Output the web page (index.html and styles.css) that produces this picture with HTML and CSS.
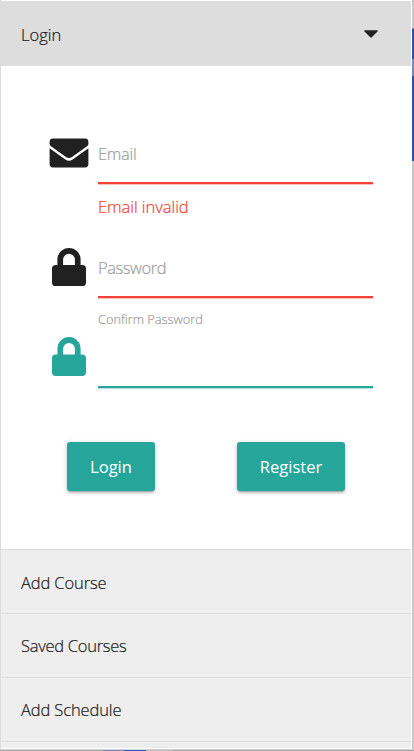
FILE: index.html
```html
<!DOCTYPE html>
<html lang="en">
<head>
<meta charset="utf-8">
<title>Login</title>
<link rel="stylesheet" href="styles.css">
</head>
<body>
<div class="window">
  <main class="panel">
    <header class="item open"><span class="t-login">Login</span>
      <svg class="caret" width="14" height="8" viewBox="0 0 14 8"><path d="M.8.2h12.4q1 .3.3 1.2L8 7Q7 8 6 7L.5 1.4Q-.2.5.8.2z"/></svg>
    </header>
    <form class="form">
      <div class="field email">
        <svg class="icon" width="40" height="30" viewBox="0 0 40 30"><path d="M4 .5h32q3.4 0 3.4 3.4v2.2q0 1.2-1 2L23 19q-3 2.2-6 0L1.6 8.1q-1-.8-1-2V3.9Q.6.5 4 .5zM.6 10.2 16.3 21.4q3.7 2.5 7.4 0L39.4 10.2v15.9q0 3.4-3.4 3.4H4Q.6 29.5.6 26.1z"/></svg>
        <div class="input"><label class="t-email">Email</label></div>
      </div>
      <p class="error"><span>Email invalid</span></p>
      <div class="field password">
        <svg class="icon" width="34" height="38" viewBox="0 0 34 38"><path fill-rule="evenodd" d="M5.4 17v-5.5a11.6 11.5 0 0 1 23.2 0V17h1.6Q34 17 34 20.6v13.8Q34 38 30.4 38H3.6Q0 38 0 34.4V20.6Q0 17 3.8 17zm5.7 0h11.8v-5a5.9 6.2 0 0 0-11.8 0z"/></svg>
        <div class="input"><label class="t-password">Password</label></div>
      </div>
      <p class="small"><span>Confirm Password</span></p>
      <div class="field confirm">
        <svg class="icon" width="34" height="39" viewBox="0 0 34 38" preserveAspectRatio="none"><path fill-rule="evenodd" d="M5.4 17v-5.5a11.6 11.5 0 0 1 23.2 0V17h1.6Q34 17 34 20.6v13.8Q34 38 30.4 38H3.6Q0 38 0 34.4V20.6Q0 17 3.8 17zm5.7 0h11.8v-5a5.9 6.2 0 0 0-11.8 0z"/></svg>
        <div class="input"></div>
      </div>
      <div class="actions">
        <button type="button" class="btn login">Login</button>
        <button type="button" class="btn register">Register</button>
      </div>
    </form>
    <nav>
      <div class="item"><span class="t-add">Add Course</span></div>
      <div class="item raised"><span class="t-saved">Saved Courses</span></div>
      <div class="item raised"><span class="t-schedule">Add Schedule</span></div>
      <div class="item last"></div>
    </nav>
  </main>
  <div class="edge"></div>
</div>
<div class="bottom-edge"></div>
</body>
</html>
```
FILE: styles.css
```css
* { box-sizing: border-box; }
body {
  margin: 0;
  height: 751px;
  overflow: hidden;
  background: #fff;
  color: #212121;
  font: 300 16.5px/24px "Open Sans", "Noto Sans", sans-serif;
  -webkit-text-stroke: .22px currentColor;
}
.window { display: flex; height: 749px; }
.panel { width: 412px; padding-top: 1px; border-right: 1px solid #fff; border-left: 1px solid #ddd; }
.edge {
  width: 2px;
  background: linear-gradient(#c8c8c8 28px, #888 28px 29px, #2d54a6 29px 59px, #7389b8 59px 76px, #2d54a6 76px 161px, #c8c8c8 161px);
}
.bottom-edge {
  height: 2px;
  border-top: 1px solid #d0d0d0;
  background: linear-gradient(90deg, #aaa 103px, #7389b8 103px 124px, #2d62b6 124px 146px, #bbb 146px 173px, #a5a5a5 173px);
}
.item {
  display: flex;
  align-items: center;
  justify-content: space-between;
  height: 64px;
  padding: 2px 33px 0 20px;
  background: #eee;
  border-top: 1px solid #ddd;
}
.open { height: 65px; background: #ddd; }
.raised { padding-top: 0; }
.last { height: 7px; padding: 0; }
.caret { fill: #212121; margin-bottom: 3px; }
.t-add, .t-schedule { letter-spacing: -.12px; }
.t-saved { letter-spacing: -.28px; }
.form { height: 483px; padding: 70px 38px 0 48px; background: #fff; }
.field { display: flex; }
.icon { flex: none; fill: #212121; }
.email .icon { margin: 2px 9px 0 0; }
.password .icon { margin: 2px 12px 0 3px; }
.confirm .icon { margin: 1px 12px 0 3px; fill: #26a69a; }
.input { flex: 1; height: 48px; padding-top: 6px; border-bottom: 2px solid #f44336; box-shadow: 0 1px 0 #fac0bc; color: #9e9e9e; }
.t-email { letter-spacing: -.3px; }
.t-password { letter-spacing: -.45px; }
.email { height: 48px; }
.error { height: 24px; margin: 11px 0 0 49px; color: #f44336; letter-spacing: -.05px; }
.password { margin-top: 27px; }
.password .input { height: 52px; padding-top: 10px; }
.small { height: 20px; margin: 11px 0 0 49px; font-size: 12.8px; line-height: 20px; color: #9e9e9e; }
.confirm { margin-top: 7px; }
.confirm .input { height: 52px; border-color: #26a69a; box-shadow: 0 1px 0 #b7e1dd; }
.actions { display: flex; justify-content: space-between; margin: 54px 28px 0 18px; }
.btn {
  height: 49px;
  padding: 1px 0 0;
  border: 0;
  border-radius: 3px;
  background: #26a69a;
  color: #fff;
  font: 400 16.5px/24px "Open Sans", "Noto Sans", sans-serif;
  -webkit-text-stroke: 0;
  box-shadow: 0 2px 2px rgba(0,0,0,.14), 0 3px 1px -2px rgba(0,0,0,.12), 0 1px 5px rgba(0,0,0,.2);
}
.login { width: 88px; }
.register { width: 108px; }
```
